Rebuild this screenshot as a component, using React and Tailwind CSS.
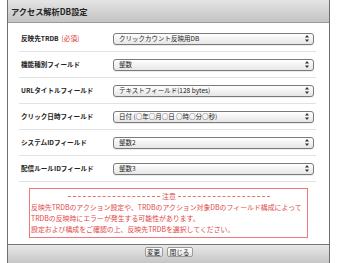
const font = { fontFamily: '"Noto Sans CJK JP", "Noto Sans", sans-serif' };

function Select({ value }) {
  return (
    <div className="w-[201px] h-[12px] rounded-[3px] border border-[#7a7a7a] bg-gradient-to-b from-white to-[#e6e6e6] flex items-center justify-between pl-[5px] pr-[4px] shadow-[0_1px_0_rgba(0,0,0,0.08)]">
      <span className="text-[6.5px] leading-none text-[#222] whitespace-nowrap">{value}</span>
      <svg width="4" height="7" viewBox="0 0 4 7">
        <polygon points="2,0 4,2.6 0,2.6" fill="#333" />
        <polygon points="0,4.4 4,4.4 2,7" fill="#333" />
      </svg>
    </div>
  );
}

function Row({ label, req, value }) {
  return (
    <div className="h-[26px] border-b border-[#e2e2e2] flex items-center">
      <div className="w-[94px] pl-[2px] text-[6.6px] font-bold text-[#222] whitespace-nowrap leading-none">
        {label}
        {req && <span className="text-[#e03030] font-normal ml-[3px]">[必須]</span>}
      </div>
      <Select value={value} />
    </div>
  );
}

export default function App() {
  const rows = [
    { label: '反映先TRDB', req: true, value: 'クリックカウント反映用DB' },
    { label: '機能種別フィールド', value: '整数' },
    { label: 'URLタイトルフィールド', value: 'テキストフィールド(128 bytes)' },
    { label: 'クリック日時フィールド', value: '日付 (○年○月○日 ○時○分○秒)' },
    { label: 'システムIDフィールド', value: '整数2' },
    { label: '配信ルールIDフィールド', value: '整数3' },
  ];
  return (
    <div className="w-[337px] h-[263px] bg-white overflow-hidden" style={font}>
      <div className="ml-[7px] w-[323px] h-[263px] border-x border-[#6e6e6e] flex flex-col">
        <div className="h-[23px] shrink-0 bg-gradient-to-b from-[#e4e4e4] to-[#c4c4c4] border-b border-[#9a9a9a] flex items-center pl-[3px]">
          <span className="text-[8.2px] font-bold text-[#222] leading-none">アクセス解析DB設定</span>
        </div>
        <div className="flex-1 pl-[11px] pr-[13px] pt-[3px]">
          {rows.map((r, i) => (
            <Row key={i} {...r} />
          ))}
          <div className="mt-[6px] ml-[10px] mr-[8px] h-[50px] border border-[#ee7777] pt-[2px] pl-[1px] text-[6.9px] leading-[11px] text-[#e04848] whitespace-nowrap">
            <div className="flex items-center justify-center gap-[2px] h-[11px]">
              <div className="w-[92px] border-t border-dashed border-[#e87070]" />
              <span>注意</span>
              <div className="w-[92px] border-t border-dashed border-[#e87070]" />
            </div>
            <div>反映先TRDBのアクション設定や、TRDBのアクション対象DBのフィールド構成によって</div>
            <div>TRDBの反映時にエラーが発生する可能性があります。</div>
            <div>設定および構成をご確認の上、反映先TRDBを選択してください。</div>
          </div>
        </div>
        <div className="h-[19px] shrink-0 border-t border-[#777] bg-gradient-to-b from-[#e8e8e8] to-[#c6c6c6] flex items-start justify-center gap-[4px] pt-[2px]">
          <div className="h-[10px] w-[18px] rounded-[2px] border border-[#9a9a9a] bg-gradient-to-b from-white to-[#e0e0e0] text-[6.5px] leading-none text-[#222] flex items-center justify-center">変更</div>
          <div className="h-[10px] w-[26px] rounded-[2px] border border-[#9a9a9a] bg-gradient-to-b from-white to-[#e0e0e0] text-[6.5px] leading-none text-[#222] flex items-center justify-center">閉じる</div>
        </div>
      </div>
    </div>
  );
}
